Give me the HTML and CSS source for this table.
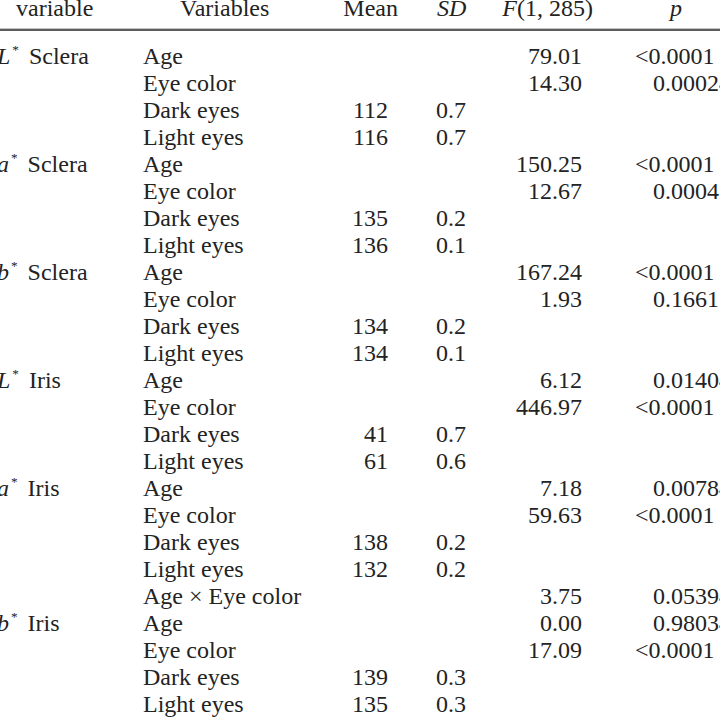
FILE: index.html
```html
<!DOCTYPE html>
<html lang="en">
<head>
<meta charset="utf-8">
<title>Table</title>
<link rel="stylesheet" href="styles.css">
</head>
<body>
<table class="tbl">
  <colgroup>
    <col class="c1"><col class="c2"><col class="c3"><col class="c4"><col class="c5"><col class="c6">
  </colgroup>
  <thead>
    <tr>
      <th class="h1">variable</th>
      <th class="h2">Variables</th>
      <th class="h3">Mean</th>
      <th class="h4"><i>SD</i></th>
      <th class="h5"><i>F</i>(1, 285)</th>
      <th class="h6"><i>p</i></th>
    </tr>
  </thead>
  <tbody>
    <tr class="first"><td><i>L</i><sup>*</sup> Sclera</td><td>Age</td><td class="n"></td><td class="s"></td><td class="f">79.01</td><td class="p lt">&lt;0.0001</td></tr>
    <tr><td></td><td>Eye color</td><td class="n"></td><td class="s"></td><td class="f">14.30</td><td class="p">0.00024</td></tr>
    <tr><td></td><td>Dark eyes</td><td class="n">112</td><td class="s">0.7</td><td class="f"></td><td class="p"></td></tr>
    <tr><td></td><td>Light eyes</td><td class="n">116</td><td class="s">0.7</td><td class="f"></td><td class="p"></td></tr>

    <tr><td><i>a</i><sup>*</sup> Sclera</td><td>Age</td><td class="n"></td><td class="s"></td><td class="f">150.25</td><td class="p lt">&lt;0.0001</td></tr>
    <tr><td></td><td>Eye color</td><td class="n"></td><td class="s"></td><td class="f">12.67</td><td class="p">0.00045</td></tr>
    <tr><td></td><td>Dark eyes</td><td class="n">135</td><td class="s">0.2</td><td class="f"></td><td class="p"></td></tr>
    <tr><td></td><td>Light eyes</td><td class="n">136</td><td class="s">0.1</td><td class="f"></td><td class="p"></td></tr>

    <tr><td><i>b</i><sup>*</sup> Sclera</td><td>Age</td><td class="n"></td><td class="s"></td><td class="f">167.24</td><td class="p lt">&lt;0.0001</td></tr>
    <tr><td></td><td>Eye color</td><td class="n"></td><td class="s"></td><td class="f">1.93</td><td class="p">0.1661</td></tr>
    <tr><td></td><td>Dark eyes</td><td class="n">134</td><td class="s">0.2</td><td class="f"></td><td class="p"></td></tr>
    <tr><td></td><td>Light eyes</td><td class="n">134</td><td class="s">0.1</td><td class="f"></td><td class="p"></td></tr>

    <tr><td><i>L</i><sup>*</sup> Iris</td><td>Age</td><td class="n"></td><td class="s"></td><td class="f">6.12</td><td class="p">0.01404</td></tr>
    <tr><td></td><td>Eye color</td><td class="n"></td><td class="s"></td><td class="f">446.97</td><td class="p lt">&lt;0.0001</td></tr>
    <tr><td></td><td>Dark eyes</td><td class="n">41</td><td class="s">0.7</td><td class="f"></td><td class="p"></td></tr>
    <tr><td></td><td>Light eyes</td><td class="n">61</td><td class="s">0.6</td><td class="f"></td><td class="p"></td></tr>

    <tr><td><i>a</i><sup>*</sup> Iris</td><td>Age</td><td class="n"></td><td class="s"></td><td class="f">7.18</td><td class="p">0.00784</td></tr>
    <tr><td></td><td>Eye color</td><td class="n"></td><td class="s"></td><td class="f">59.63</td><td class="p lt">&lt;0.0001</td></tr>
    <tr><td></td><td>Dark eyes</td><td class="n">138</td><td class="s">0.2</td><td class="f"></td><td class="p"></td></tr>
    <tr><td></td><td>Light eyes</td><td class="n">132</td><td class="s">0.2</td><td class="f"></td><td class="p"></td></tr>
    <tr><td></td><td>Age × Eye color</td><td class="n"></td><td class="s"></td><td class="f">3.75</td><td class="p">0.05394</td></tr>

    <tr><td><i>b</i><sup>*</sup> Iris</td><td>Age</td><td class="n"></td><td class="s"></td><td class="f">0.00</td><td class="p">0.98034</td></tr>
    <tr><td></td><td>Eye color</td><td class="n"></td><td class="s"></td><td class="f">17.09</td><td class="p lt">&lt;0.0001</td></tr>
    <tr><td></td><td>Dark eyes</td><td class="n">139</td><td class="s">0.3</td><td class="f"></td><td class="p"></td></tr>
    <tr><td></td><td>Light eyes</td><td class="n">135</td><td class="s">0.3</td><td class="f"></td><td class="p"></td></tr>
  </tbody>
</table>
</body>
</html>
```

FILE: styles.css
```css
html, body {
  margin: 0;
  padding: 0;
  background: #ffffff;
  overflow: hidden;
  width: 720px;
  height: 720px;
}

.tbl {
  font-family: "Liberation Serif", "Times New Roman", serif;
  font-size: 24px;
  line-height: 27px;
  color: #232323;
  border-collapse: collapse;
  table-layout: fixed;
  width: 763px;
  margin: -5px 0 0 -3px;
}

.c1 { width: 146px; }
.c2 { width: 177px; }
.c3 { width: 80px; }
.c4 { width: 80px; }
.c5 { width: 120px; }
.c6 { width: 160px; }

.tbl th,
.tbl td {
  padding: 0;
  white-space: nowrap;
  vertical-align: top;
  overflow: visible;
}

.tbl th {
  font-weight: normal;
  padding-bottom: 7px;
  border-bottom: 2px solid #5c5c5c;
  box-shadow: 0 -1px 0 #c4c4c4 inset;
}

.tbl th.h1 { text-align: left; padding-left: 19px; }
.tbl th.h2 { text-align: left; padding-left: 37px; }
.tbl th.h3 { text-align: right; padding-right: 2px; }
.tbl th.h4 { text-align: left; padding-left: 37px; }
.tbl th.h5 { text-align: right; padding-right: 7px; }
.tbl th.h6 { text-align: left; padding-left: 70px; }

.tbl tr.first td { padding-top: 12px; }

.tbl td.n { text-align: right; padding-right: 12px; }
.tbl td.s { text-align: left; padding-left: 36px; }
.tbl td.f { text-align: right; padding-right: 18px; }
.tbl td.p { text-align: left; padding-left: 53px; }
.tbl td.lt { text-indent: -18px; }

.tbl sup {
  font-size: 0.55em;
  line-height: 0;
  vertical-align: 0.75em;
  margin-left: 2px;
  margin-right: 4px;
}
```
